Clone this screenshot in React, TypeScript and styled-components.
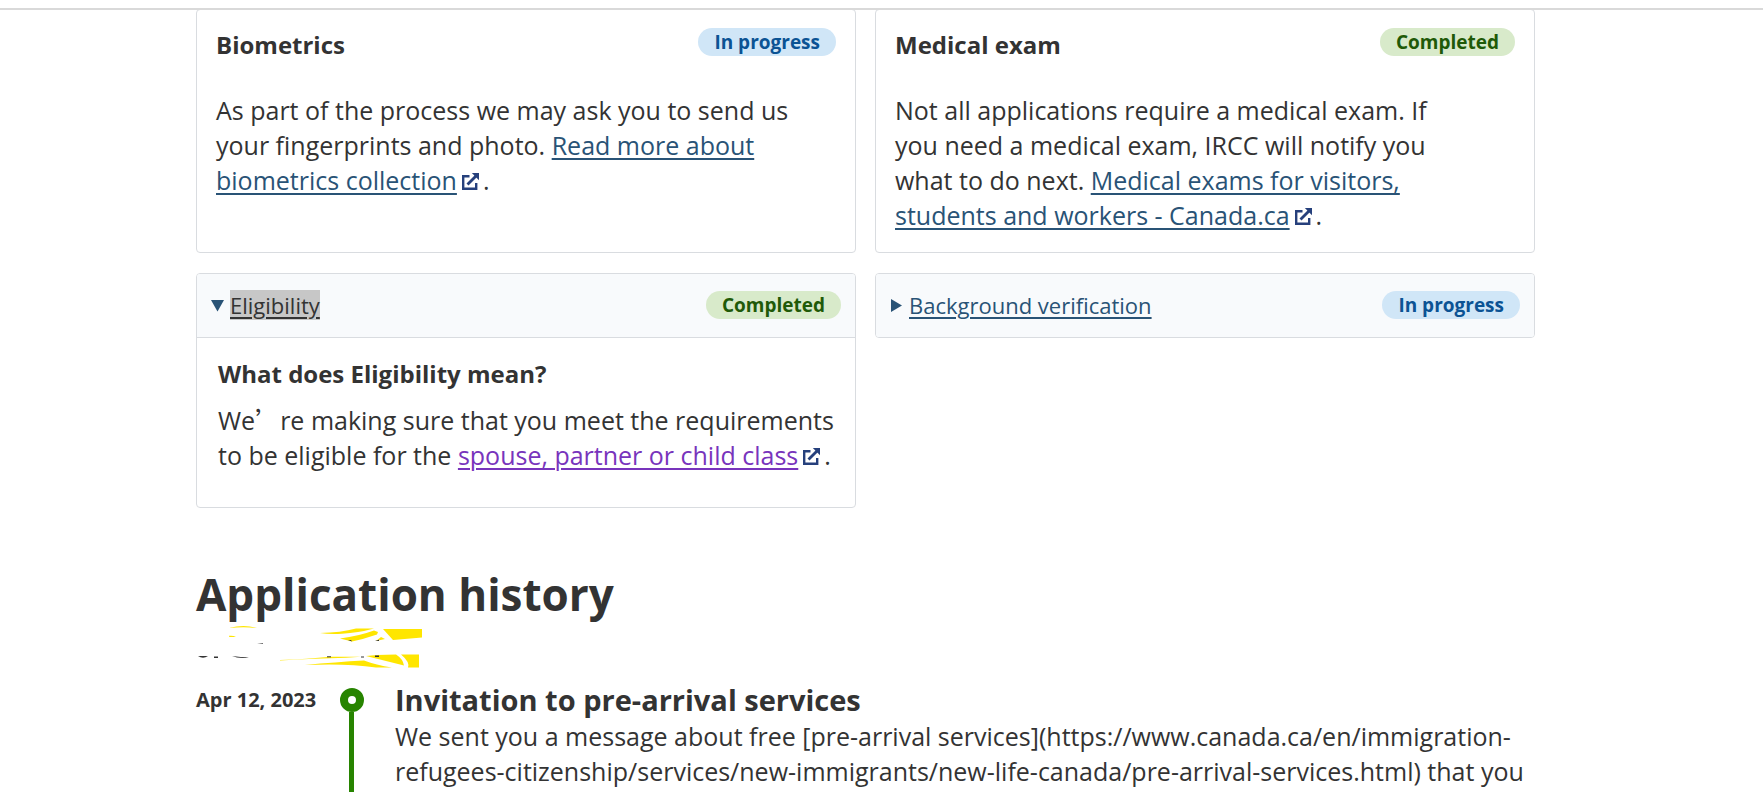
import React from 'react';
import styled, { createGlobalStyle, css } from 'styled-components';

const GlobalStyle = createGlobalStyle`
  *, *::before, *::after { box-sizing: border-box; }
  body {
    margin: 0;
    background: #ffffff;
    color: #333333;
    font-family: 'Open Sans', 'Noto Sans', 'Noto Sans CJK SC', sans-serif;
    font-size: 25px;
    line-height: 35px;
  }
  h2, h3, p, ul { margin: 0; padding: 0; }
`;

type Status = 'progress' | 'done';

const Page = styled.div`
  display: flex;
  flex-direction: column;
  min-height: 100vh;
`;

const TopBar = styled.header`
  position: relative;
  z-index: 1;
  height: 10px;
  flex: none;
  background: #ffffff;
  border-bottom: 2px solid #d9d9d9;
`;

const Main = styled.main`
  flex: 1;
  display: flex;
  flex-direction: column;
  padding: 0 228px 0 196px;
`;

const CardGrid = styled.div`
  display: grid;
  grid-template-columns: 1fr 1fr;
  gap: 20px 19px;
  align-items: start;
  margin-top: -1px;
`;

const cardFrame = css`
  border: 1px solid #d9dce0;
  border-radius: 4px;
  background: #ffffff;
`;

const StatusCard = styled.section`
  ${cardFrame}
  align-self: stretch;
  padding: 18px 19px 19px;
`;

const CardHead = styled.div`
  display: flex;
  justify-content: space-between;
  align-items: flex-start;
  margin-bottom: 32px;
`;

const CardTitle = styled.h3`
  font-size: 24px;
  line-height: 33px;
  font-weight: 700;
`;

const CardText = styled.p`
  padding-right: 44px;
`;

const Badge = styled.span<{ $status: Status }>`
  flex: none;
  padding: 1px 16px 0;
  border-radius: 14px;
  font-size: 19px;
  line-height: 27px;
  font-weight: 700;
  color: ${({ $status }) => ($status === 'done' ? '#1f5a08' : '#0b5394')};
  background: ${({ $status }) => ($status === 'done' ? '#d8eaca' : '#d0e6f7')};
`;

const Disclosure = styled.details`
  ${cardFrame}
  overflow: hidden;
`;

const Summary = styled.summary`
  display: flex;
  align-items: center;
  padding: 16px 14px 17px;
  background: #f8fafc;
  color: #284162;
  list-style: none;
  cursor: pointer;

  &::-webkit-details-marker { display: none; }
  details[open] > & { border-bottom: 1px solid #d9dce0; }
`;

const Marker = styled.svg`
  flex: none;
  width: 13px;
  height: 13px;
  margin-right: 6px;
  fill: #295376;
`;

const SummaryLabel = styled.span<{ $selected?: boolean }>`
  margin-right: auto;
  font-size: 22px;
  line-height: 30px;
  text-decoration: underline;
  text-decoration-thickness: 2px;
  text-underline-offset: 3px;
  color: ${({ $selected }) => ($selected ? '#333333' : '#295376')};
  background: ${({ $selected }) => ($selected ? '#c7c7c7' : 'transparent')};
`;

const DisclosureBody = styled.div`
  padding: 19px 19px 34px 21px;
`;

const DisclosureTitle = styled(CardTitle)`
  margin-bottom: 13px;
`;

const WideApostrophe = styled.span`
  font-family: 'Noto Sans CJK SC', sans-serif;
  line-height: 1;
`;

const TextLink = styled.a<{ $visited?: boolean }>`
  color: ${({ $visited }) => ($visited ? '#7834bc' : '#295376')};
  text-decoration: underline;
  text-decoration-thickness: 2px;
  text-underline-offset: 3px;
`;

const ExternalGlyph = styled.svg`
  width: 17px;
  height: 17px;
  margin: 0 4px 0 5px;
  fill: none;
  stroke: #26407c;
  stroke-width: 2.4;
`;

const SectionTitle = styled.h2`
  margin-top: 56px;
  font-size: 44px;
  line-height: 60px;
  font-weight: 700;
`;

const Redaction = styled.svg`
  display: block;
  flex: none;
  width: 230px;
  height: 44px;
  margin-bottom: 12px;
`;

const Timeline = styled.ul`
  flex: 1;
  display: flex;
  flex-direction: column;
  list-style: none;
`;

const TimelineItem = styled.li`
  flex: 1;
  display: grid;
  grid-template-columns: 144px 24px 1fr;
`;

const DateLabel = styled.time`
  padding-top: 6px;
  font-size: 20px;
  line-height: 28px;
  font-weight: 700;
`;

const Rail = styled.div`
  display: flex;
  flex-direction: column;
  align-items: center;
  padding-top: 8px;

  &::before {
    content: '';
    flex: none;
    width: 24px;
    height: 24px;
    border: 8px solid #278400;
    border-radius: 50%;
  }
  &::after {
    content: '';
    flex: 1;
    width: 5px;
    margin-right: 1px;
    background: #278400;
  }
`;

const Entry = styled.div`
  padding-left: 31px;
`;

const EntryTitle = styled.h3`
  font-size: 29px;
  line-height: 39px;
  font-weight: 700;
`;

const EntryText = styled.p`
  margin-bottom: 3px;
`;

function ExternalIcon() {
  return (
    <ExternalGlyph viewBox="0 0 17 17" aria-hidden="true">
      <path d="M7.500 3.200H1.200V15.800H14.200V10" />
      <path d="M5.500 11.500L14 3" strokeWidth="2.8" />
      <path d="M9.800 0H17V7.200Z" fill="#26407c" stroke="none" />
    </ExternalGlyph>
  );
}

function ExternalLink({ children, visited }: { children: string; visited?: boolean }) {
  return (
    <>
      <TextLink href="#" $visited={visited}>{children}</TextLink>
      <ExternalIcon />
    </>
  );
}

function StatusBadge({ status }: { status: Status }) {
  return <Badge $status={status}>{status === 'done' ? 'Completed' : 'In progress'}</Badge>;
}

function HighlighterMarks() {
  return (
    <Redaction viewBox="0 0 230 44" aria-hidden="true">
      <g fill="#ffe600">
        <path d="M33 4Q48 0 61 4Q48 2.500 33 4Z" />
        <path d="M33 11.800Q37 11.500 40 12.500Q36 13.500 33 12.800Z" />
        <path d="M124 9Q145 8.500 160 4.500L178 4.500Q162 9 146 9.700Q134 10.500 124 9Z" />
        <path d="M144 14.500Q163 12 178 6.500L182 8L181 10.500Q168 15 156 17.500Z" />
        <path d="M180 17L185 13L189 15Z" />
        <path d="M187 5H226V13.500L197 16Z" />
        <path d="M84 36Q112 35 134 32.700H165L150 33.800Q120 34.500 84 36.600Z" />
        <path d="M109 41Q140 38 168 36.500Q180 41 196 43.500H180Q150 39 109 41Z" />
        <path d="M170 32L181 31L200 30.500Q207 35 208 41.500Q190 37 170 32Z" />
        <path d="M205 30.500H223V43.500H212Q214 38 205 30.500Z" />
      </g>
      <g fill="#333333">
        <path d="M2 32H12Q7 35.500 2 32Z" />
        <path d="M18 32.500H22V34H18Z" />
        <path d="M36 32Q45 33 53 33.500Q43 35 36 32Z" />
        <path d="M61 19.500L67 19V19.800Z" />
        <path d="M152 16H155L156 17.500Z" />
        <path d="M179 17L183 15.800V17Z" />
        <path d="M131 32.300H135V33.300H131Z" />
        <path d="M165 32.500H168V33.500H165Z" />
        <path d="M179 31.500H183V33H179Z" />
      </g>
    </Redaction>
  );
}

export default function App() {
  return (
    <Page>
      <GlobalStyle />
      <TopBar />
      <Main>
        <CardGrid>
          <StatusCard>
            <CardHead>
              <CardTitle>Biometrics</CardTitle>
              <StatusBadge status="progress" />
            </CardHead>
            <CardText>
              As part of the process we may ask you to send us your fingerprints and photo.{' '}
              <ExternalLink>Read more about biometrics collection</ExternalLink>.
            </CardText>
          </StatusCard>

          <StatusCard>
            <CardHead>
              <CardTitle>Medical exam</CardTitle>
              <StatusBadge status="done" />
            </CardHead>
            <CardText>
              Not all applications require a medical exam. If you need a medical exam, IRCC will
              notify you what to do next.{' '}
              <ExternalLink>Medical exams for visitors, students and workers - Canada.ca</ExternalLink>.
            </CardText>
          </StatusCard>

          <Disclosure open>
            <Summary>
              <Marker viewBox="0 0 13 13" aria-hidden="true"><path d="M0 1H13L6.500 12.500Z" /></Marker>
              <SummaryLabel $selected>Eligibility</SummaryLabel>
              <StatusBadge status="done" />
            </Summary>
            <DisclosureBody>
              <DisclosureTitle>What does Eligibility mean?</DisclosureTitle>
              <p>
                We<WideApostrophe lang="zh-CN">’</WideApostrophe>re making sure that you meet the
                requirements to be eligible for the{' '}
                <ExternalLink visited>spouse, partner or child class</ExternalLink>.
              </p>
            </DisclosureBody>
          </Disclosure>

          <Disclosure>
            <Summary>
              <Marker viewBox="0 0 13 13" aria-hidden="true"><path d="M1 0L12 6.500L1 13Z" /></Marker>
              <SummaryLabel>Background verification</SummaryLabel>
              <StatusBadge status="progress" />
            </Summary>
          </Disclosure>
        </CardGrid>

        <SectionTitle>Application history</SectionTitle>
        <HighlighterMarks />

        <Timeline>
          <TimelineItem>
            <DateLabel dateTime="2023-04-12">Apr 12, 2023</DateLabel>
            <Rail />
            <Entry>
              <EntryTitle>Invitation to pre-arrival services</EntryTitle>
              <EntryText>
                We sent you a message about free [pre-arrival
                services](https://www.canada.ca/en/immigration-refugees-citizenship/services/new-immigrants/new-life-canada/pre-arrival-services.html)
                that you
              </EntryText>
            </Entry>
          </TimelineItem>
        </Timeline>
      </Main>
    </Page>
  );
}
